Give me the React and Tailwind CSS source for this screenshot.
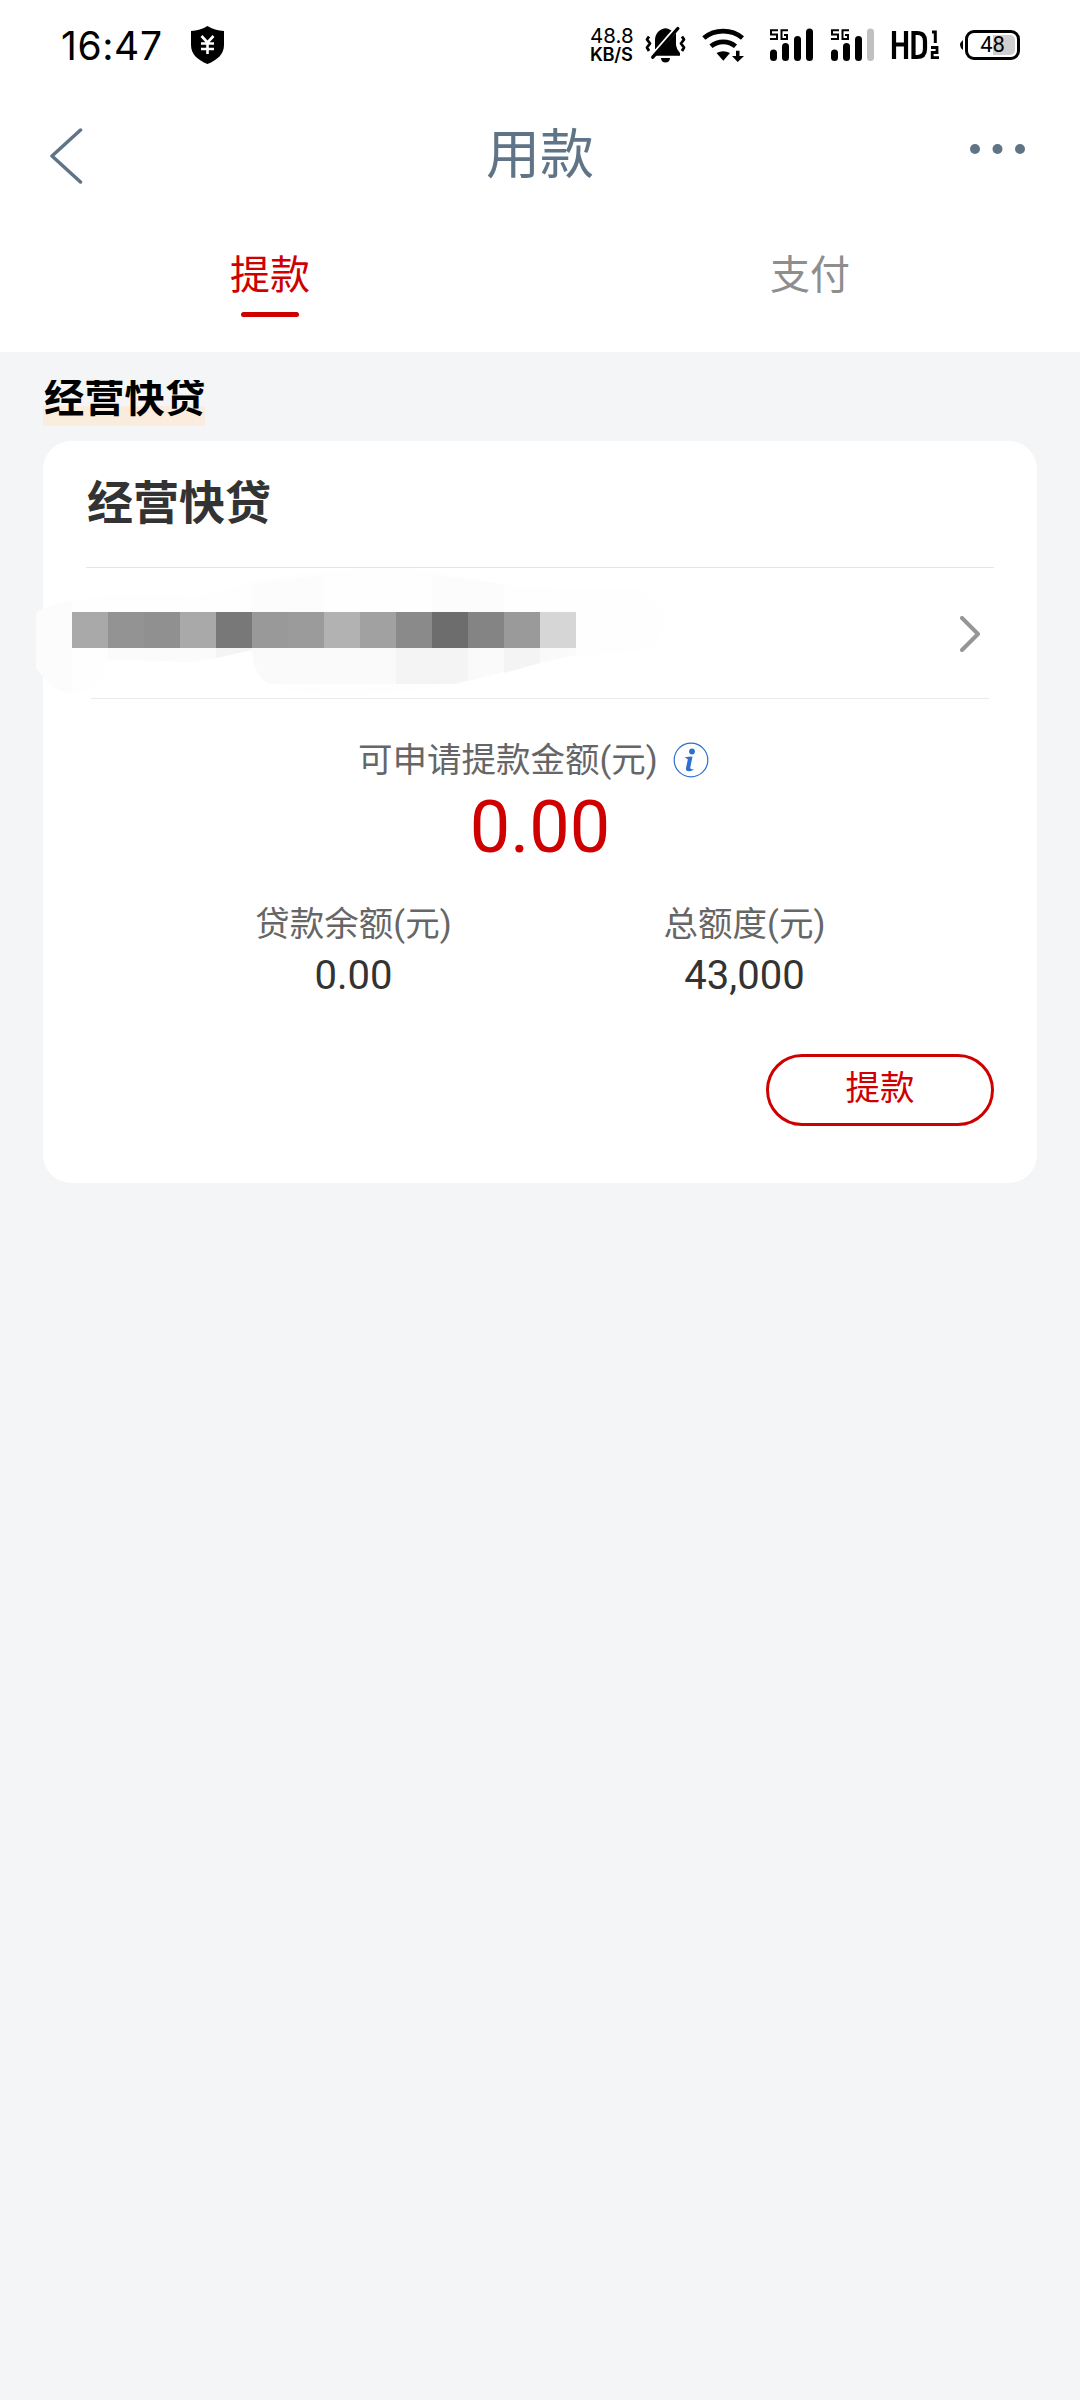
const PIXELS = [
  '#a9a9a9', '#939393', '#909090', '#a9a9a9', '#787878', '#999999', '#9b9b9b',
  '#b2b2b2', '#a1a1a1', '#8a8a8a', '#6d6d6d', '#848484', '#9a9a9a', '#d6d6d6',
];

function ShieldIcon() {
  return (
    <svg className="ml-[28px] mt-[26px] h-[38px] w-[33px] shrink-0" viewBox="0 0 33 38">
      <path d="M16.5 0C12 3 6 4.8 0 5v14c0 9 6.5 15 16.5 19C26.500 34 33 28 33 19V5C27 4.800 21 3 16.500 0Z" fill="#000" />
      <path d="M10.500 10l6 6.500 6-6.500M10 17.500h13M10 23h13M16.500 16.500V28" fill="none" stroke="#fff" strokeWidth="2.600" />
    </svg>
  );
}

function MutedBellIcon() {
  return (
    <svg className="ml-[11px] mt-[26px] h-[37px] w-[41px] shrink-0" viewBox="0 0 41 37">
      <path d="M10 23.500V15C10 8 13 5 17.500 3Q20.500 1.500 23.500 3L26.500 4.500Z" fill="#000" />
      <path d="M31 7V19Q31.500 23.500 35 27V29.700H10Z" fill="#000" />
      <path d="M16 32h9c0 6-9 6-9 0Z" fill="#000" />
      <path d="M7.800 31.200L32.800 2.500" stroke="#000" strokeWidth="3.400" strokeLinecap="round" />
      <path d="M4 10.500l-2 3 3 4-3 4 2 3.500M37 10.500l2 3-3 4 3 4-2 3.500" fill="none" stroke="#000" strokeWidth="2.800" strokeLinejoin="round" />
    </svg>
  );
}

function WifiIcon() {
  return (
    <svg className="ml-[15px] mt-[28px] h-[34px] w-[43px] shrink-0" viewBox="0 0 43 34">
      <path d="M2.800 10C14 0.800 30.500 0.800 41.500 10" fill="none" stroke="#000" strokeWidth="4.800" />
      <path d="M10 18.300C17 12.300 27.500 12.300 34.500 18.300" fill="none" stroke="#000" strokeWidth="4.800" />
      <path d="M15.500 25Q22.300 21.500 29 25L22.300 32.800Z" fill="#000" />
      <path d="M35 22.800H38.500V28H43L36.700 34 31 28H35Z" fill="#000" />
    </svg>
  );
}

function SignalIcon({ last, className }) {
  return (
    <svg className={className} viewBox="0 0 44 34">
      <path d="M9 2.200H2V6.500H8V11H1M19 2.200H12.500V11H18V7H15" fill="none" stroke="#000" strokeWidth="2" />
      <rect x="1" y="21.500" width="7" height="11.500" rx="3.500" />
      <rect x="13" y="15" width="7" height="18" rx="3.500" />
      <rect x="25" y="8" width="7" height="25" rx="3.500" />
      <rect x="37" y="0.500" width="7" height="32.500" rx="3.500" fill={last} />
    </svg>
  );
}

function HdIcon() {
  return (
    <svg className="ml-[17px] mt-[28px] h-[34px] w-[50px] shrink-0" viewBox="0 0 50 34" fill="none" stroke="#000">
      <path d="M3 3V31M15 3V31M3 16.500H15" strokeWidth="4.200" />
      <path d="M22.500 5V29H26C32 29 34 26 34 21V13C34 8 32 5 26 5Z" strokeWidth="4.200" />
      <path d="M41 4H44.300V15" strokeWidth="3" />
      <path d="M40 19.500H46V24.500H41.200V29.600H48" strokeWidth="2.800" />
    </svg>
  );
}

function Battery() {
  return (
    <div className="ml-[19px] mt-[30px] flex h-[30px] items-center">
      <svg className="h-[10px] w-[3px]" viewBox="0 0 3 10"><path d="M3 0Q-3 5 3 10Z" /></svg>
      <div className="ml-[2px] flex h-[30px] w-[55px] rounded-[9px] border-[3px] border-black p-[2px]">
        <div className="flex h-full w-full items-center justify-center rounded-[5px] bg-[linear-gradient(90deg,#fff_50%,#cfcfcf_50%)] font-['Roboto'] text-[22px] leading-none">48</div>
      </div>
    </div>
  );
}

function StatusBar() {
  return (
    <div className="flex h-[90px] items-start pl-[61px] text-black">
      <div className="mt-[21px] w-[102px] whitespace-nowrap font-['Inter'] text-[39px] leading-[50px] tracking-[0.6px]">16:47</div>
      <ShieldIcon />
      <div className="ml-[366px] mt-[27px] w-[44px] whitespace-nowrap font-['Inter'] text-[20.500px] leading-[18px]">
        <div>48.8</div>
        <div className="text-[18.300px] font-semibold tracking-[-0.3px]">KB/S</div>
      </div>
      <MutedBellIcon />
      <WifiIcon />
      <SignalIcon last="#000" className="ml-[25px] mt-[28px] h-[34px] w-[44px] shrink-0" />
      <SignalIcon last="#c0c0c0" className="ml-[17px] mt-[28px] h-[34px] w-[44px] shrink-0" />
      <HdIcon />
      <Battery />
    </div>
  );
}

function Header() {
  return (
    <div className="flex h-[130px] items-start justify-between px-[50px] text-[#5f7486]">
      <svg className="mt-[38px] h-[56px] w-[57px]" viewBox="0 0 57 56" fill="none" stroke="currentColor" strokeWidth="3.500" strokeLinecap="round" strokeLinejoin="round">
        <path d="M30.500 2L2 28 30.500 54" />
      </svg>
      <h1 className="mt-[26px] text-[54px] leading-[80px]">用款</h1>
      <svg className="mt-[53px] h-[12px] w-[57px] overflow-visible" viewBox="0 0 57 12" fill="currentColor">
        <circle cx="2" cy="6" r="5" />
        <circle cx="24.500" cy="6" r="5" />
        <circle cx="47" cy="6" r="5" />
      </svg>
    </div>
  );
}

function Tabs() {
  return (
    <div className="grid h-[132px] grid-cols-2 text-[40px] leading-[60px]">
      <div className="flex flex-col items-center pt-[26px] text-[#cf0000]">
        <span>提款</span>
        <span className="mt-[6px] h-[5px] w-[58px] rounded-full bg-[#cf0000]" />
      </div>
      <div className="flex flex-col items-center pt-[26px] text-[#8e8e8e]">支付</div>
    </div>
  );
}

function RedactedAccount() {
  return (
    <div className="relative -ml-[50px] flex h-[130px] items-start pl-[36px] pt-[44px]">
      <svg className="absolute left-0 top-0 h-[130px] w-[640px]" viewBox="36 568 640 130">
        <path d="M36 613C55 601 95 597 120 594L200 596C240 584 280 574 330 571C390 566 440 568 500 585C540 590 590 586 640 589C670 605 670 630 650 648C620 656 590 654 560 655C500 675 460 684 400 692C330 699 270 695 258 670Q252 660 252 650C235 651 220 663 190 662Q145 657 107 660C106 678 94 693 71 693Q54 693 36 668Z" fill="#fefefe" />
        <path d="M36 613Q50 604 72 600V693Q54 693 36 668Z" fill="#fcfcfc" />
        <path d="M108 648H216V658Q190 664 170 661L108 660Z" fill="#fbfbfb" />
        <path d="M252 648H576V655L540 663L455 684H268Q252 672 252 648Z" fill="#fafafa" />
        <path d="M396 648H468V680L455 684H396ZM504 648H540V663L504 673ZM216 648H252V650L216 658Z" fill="#f4f4f4" />
        <path d="M252 584L324 575V612H252ZM432 575L504 584V612H432Z" fill="#fcfcfc" />
      </svg>
      <div className="relative flex">
        {PIXELS.map((color, i) => (
          <span key={i} className="h-[36px] w-[36px]" style={{ backgroundColor: color }} />
        ))}
      </div>
      <svg className="ml-auto mr-[13px] mt-[4px] h-[36px] w-[21px]" viewBox="0 0 21 36" fill="none" stroke="#969696" strokeWidth="4" strokeLinecap="round" strokeLinejoin="round">
        <path d="M2 2L18 18 2 34" />
      </svg>
    </div>
  );
}

function InfoIcon() {
  return (
    <svg className="ml-[15px] h-[36px] w-[36px]" viewBox="0 0 36 36">
      <circle cx="18" cy="18" r="16.800" fill="none" stroke="#2d6fcd" strokeWidth="1.200" />
      <circle cx="19" cy="9.500" r="2.900" fill="#2d6fcd" />
      <path d="M11.500 15.500Q15 14.500 19.500 14.500L17.300 25.500Q17 27.500 21 27.300Q18.500 29.500 15.500 29.300Q12.300 29.200 13 26L14.800 17.500Q14.500 16.300 11.500 15.500Z" fill="#2d6fcd" />
    </svg>
  );
}

function Stat({ label, value }) {
  return (
    <div className="flex w-[391px] flex-col items-center">
      <span className="text-[34.500px] leading-[50px] text-[#666]">{label}</span>
      <span className="mt-[3px] text-[40px] leading-[48px] text-[#333]">{value}</span>
    </div>
  );
}

function LoanCard() {
  return (
    <section className="mx-[43px] mt-[15px] flex h-[742px] flex-col rounded-[28px] bg-white px-[43px]">
      <h3 className="h-[126px] pl-px pt-[28px] text-[46px] font-bold leading-[68px] text-[#333]">经营快贷</h3>
      <div className="h-px shrink-0 bg-[#e4e4e4]" />
      <RedactedAccount />
      <div className="mx-[5px] h-px shrink-0 bg-[#ebebeb]" />
      <div className="mt-[36px] flex h-[50px] items-center pl-[272px] text-[34.500px] leading-[50px] text-[#666]">
        <span>可申请提款金额(元)</span>
        <InfoIcon />
      </div>
      <div className="mt-px text-center text-[72px] leading-[84px] text-[#cf0000]">0.00</div>
      <div className="mt-[29px] flex pl-[72px]">
        <Stat label="贷款余额(元)" value="0.00" />
        <Stat label="总额度(元)" value="43,000" />
      </div>
      <button className="ml-auto mt-[54px] h-[72px] w-[228px] shrink-0 rounded-full border-[3px] border-[#cf0000] pb-[4px] text-[34.500px] leading-[50px] text-[#cf0000]">提款</button>
    </section>
  );
}

export default function App() {
  return (
    <main className="h-[2400px] w-[1080px] overflow-hidden bg-[#f3f5f7] font-['Roboto','Noto_Sans_CJK_SC',sans-serif]">
      <header className="h-[352px] bg-white">
        <StatusBar />
        <Header />
        <Tabs />
      </header>
      <div className="ml-[43px] mt-[28px] h-[46px] w-[162px] overflow-hidden bg-[linear-gradient(90deg,#f9eddb,#fcecdf)] bg-[length:100%_20px] bg-bottom bg-no-repeat">
        <h2 className="-mt-[11px] whitespace-nowrap pl-px text-[40.300px] font-bold leading-[60px] text-black">经营快贷</h2>
      </div>
      <LoanCard />
    </main>
  );
}
